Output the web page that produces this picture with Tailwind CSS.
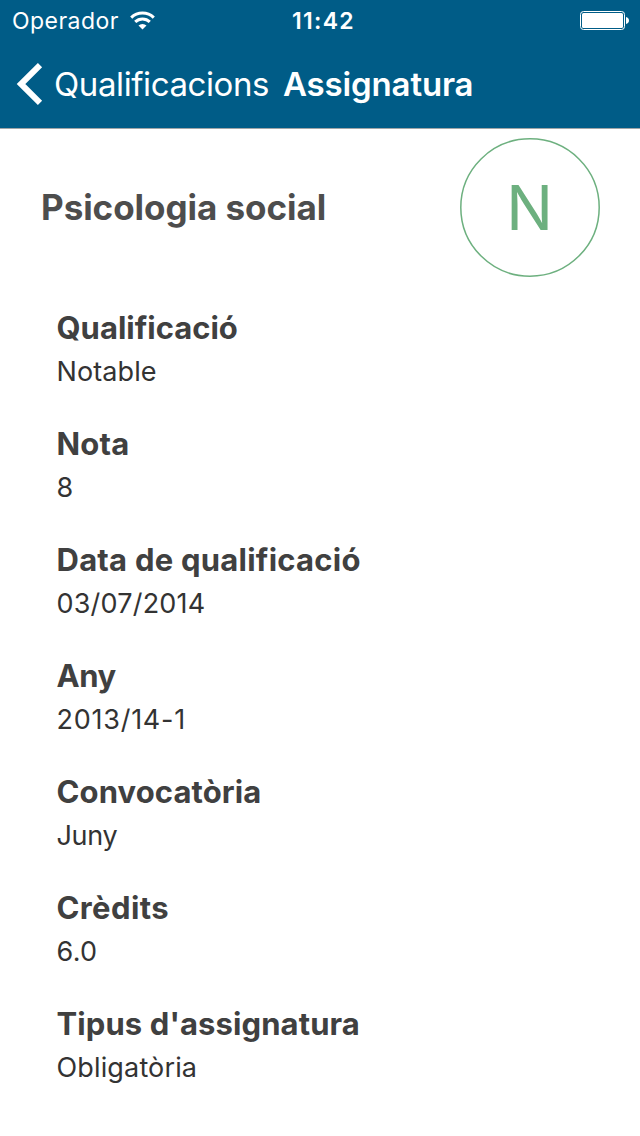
<!DOCTYPE html>
<html lang="ca">
<head>
  <meta charset="UTF-8">
  <meta name="viewport" content="width=device-width, initial-scale=1.0">
  <title>Assignatura</title>
  <script src="https://cdn.jsdelivr.net/npm/@tailwindcss/browser@4"></script>
</head>
<body class="bg-white font-['Inter','Liberation_Sans',sans-serif] h-[1136px] overflow-hidden">
  <header class="bg-[#005c87] text-white h-[129px] border-b border-[#9fa5a8]">
    <!-- Status bar -->
    <div class="grid grid-cols-3 items-center h-10 pl-3 pr-[11px]">
      <div class="flex items-center gap-[11px]">
        <span class="text-[23px] leading-10 tracking-[0.45px] pt-px">Operador</span>
        <svg class="w-[25px] h-[19px]" viewBox="0 0 25 19" fill="none" stroke="#fff" stroke-width="3">
          <path d="M1.2 6.6a16.2 16.2 0 0 1 22.6 0"/>
          <path d="M5.2 10.9a10.4 10.4 0 0 1 14.6 0"/>
          <path d="M12.5 18.6l-4-4.1a5.8 5.8 0 0 1 8 0z" fill="#fff" stroke="none"/>
        </svg>
      </div>
      <span class="text-center text-[23px] leading-10 font-semibold tracking-[1.3px] pt-px pl-1.5">11:42</span>
      <svg class="justify-self-end w-[49px] h-[19px]" viewBox="0 0 49 19">
        <rect x="0.5" y="0.5" width="44" height="18" rx="3" fill="none" stroke="#fff"/>
        <rect x="2" y="2" width="41" height="15" rx="1.5" fill="#fff"/>
        <path d="M46 6c1.8.3 3 1.7 3 3.5s-1.2 3.2-3 3.5z" fill="#fff"/>
      </svg>
    </div>
    <!-- Navigation -->
    <nav class="flex items-center h-[88px] pl-4">
      <svg class="w-[27px] h-[44px]" viewBox="0 0 27 44" fill="none" stroke="#fff" stroke-width="6">
        <path d="M24 3.2L5 22l19 18.8"/>
      </svg>
      <a href="#" class="ml-[11px] w-[214px] whitespace-nowrap text-[33px] leading-[44px] tracking-[-0.4px]">Qualificacions</a>
      <h1 class="ml-[15px] text-[33px] leading-[44px] font-semibold tracking-[-0.15px]">Assignatura</h1>
    </nav>
  </header>

  <main>
    <div class="flex items-center justify-between h-[156px] pl-[41px] pr-10">
      <h2 class="text-[35px] leading-[44px] font-bold text-[#4d4d4d] tracking-[-0.05px]">Psicologia social</h2>
      <div class="grid place-items-center text-[#6db07f]">
        <svg class="col-start-1 row-start-1 w-[140px] h-[139px]" viewBox="0 0 140 139" fill="none" stroke="currentColor" stroke-width="1.5">
          <ellipse cx="70" cy="69.5" rx="69.2" ry="68.7"/>
        </svg>
        <span class="col-start-1 row-start-1 text-[62px] leading-none pt-px pr-px">N</span>
      </div>
    </div>

    <dl class="flex flex-col gap-[30px] pt-[21px] pl-[56.5px] text-[27px] leading-10 text-[#333]">
      <div>
        <dt class="text-[31px] leading-[44px] font-bold text-[#404040]">Qualificació</dt>
        <dd class="pt-0.5 tracking-[0.1px]">Notable</dd>
      </div>
      <div>
        <dt class="text-[31px] leading-[44px] font-bold text-[#404040] tracking-[0.2px]">Nota</dt>
        <dd class="pt-0.5">8</dd>
      </div>
      <div>
        <dt class="text-[31px] leading-[44px] font-bold text-[#404040] tracking-[0.24px]">Data de qualificació</dt>
        <dd class="pt-0.5 tracking-[0.2px]">03/07/2014</dd>
      </div>
      <div>
        <dt class="text-[31px] leading-[44px] font-bold text-[#404040] tracking-[-0.4px]">Any</dt>
        <dd class="pt-0.5 tracking-[0.75px]">2013/14-1</dd>
      </div>
      <div>
        <dt class="text-[31px] leading-[44px] font-bold text-[#404040] tracking-[0.1px]">Convocatòria</dt>
        <dd class="pt-0.5 tracking-[-0.3px]">Juny</dd>
      </div>
      <div>
        <dt class="text-[31px] leading-[44px] font-bold text-[#404040] tracking-[0.4px]">Crèdits</dt>
        <dd class="pt-0.5 tracking-[0.3px]">6.0</dd>
      </div>
      <div>
        <dt class="text-[31px] leading-[44px] font-bold text-[#404040] tracking-[0.1px]">Tipus d'assignatura</dt>
        <dd class="pt-0.5 tracking-[0.15px]">Obligatòria</dd>
      </div>
    </dl>
  </main>
</body>
</html>
